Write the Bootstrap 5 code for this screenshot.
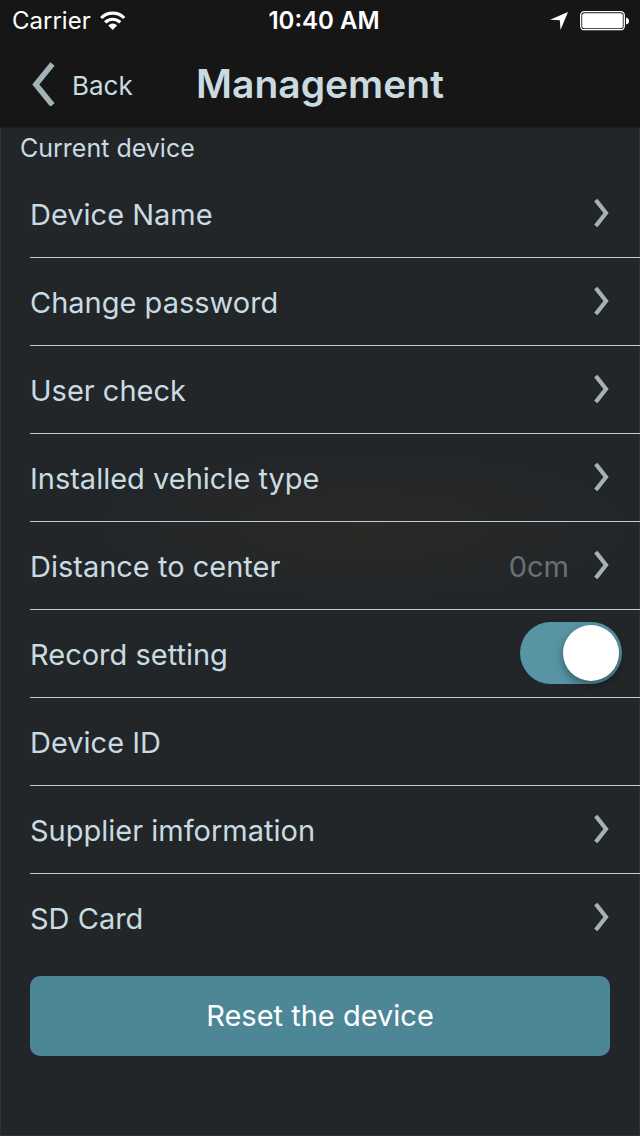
<!DOCTYPE html>
<html lang="en">
<head>
<meta charset="utf-8">
<meta name="viewport" content="width=device-width, initial-scale=1">
<title>Management</title>
<link href="https://cdn.jsdelivr.net/npm/bootstrap@5.3.0/dist/css/bootstrap.min.css" rel="stylesheet">
<style>
  :root { --ink: #c9dbe1; }
  body { background: #232629; color: var(--ink); font-family: Inter, "Liberation Sans", sans-serif; }
  .screen { background: radial-gradient(ellipse 260px 70px at 57% 525px, #292926, #23262900) #232629; box-shadow: inset 1px 0 #2e3236, inset -1px -1px #2e3236; }
  .top-area { background: #161616; box-shadow: inset 0 -1px #1c1e20; }
  .three-cols { display: grid; grid-template-columns: 1fr auto 1fr; align-items: center; }
  .status-bar { height: 40px; padding: 1px 4px 0 12px; font-size: 24px; line-height: 40px; color: #fff; }
  .battery { margin: 0 6px 0 12px; }
  .title-bar { height: 88px; padding: 0 32px; }
  .title-bar h1 { font-size: 39px; line-height: 48px; font-weight: 600; }
  .back-link { color: var(--ink); font-size: 26px; line-height: 40px; gap: 16px; }
  .back-link span { padding-top: 4px; }
  .section-label { font-size: 25px; line-height: 40px; padding: 0 0 2px 20px; font-weight: 400; }
  .settings { padding-left: 30px; }
  .setting { height: 88px; padding: 0 31px 2px 0; font-size: 29px; line-height: 40px; color: var(--ink); }
  .setting > span, .setting > label { padding-top: 4px; }
  .settings li:not(:last-child) .setting { border-bottom: 1px solid #c5cfd2; }
  .setting-value { color: #687074; margin-right: 24px; }
  .setting.has-switch { padding-right: 18px; }
  .form-switch .form-check-input.toggle {
    width: 102px; height: 62px; margin: 0; border: 0; border-radius: 31px; display: grid; align-items: center; justify-items: start;
    background: #3a4044; box-shadow: none;
  }
  .form-switch .toggle::before { content: ""; width: 56px; height: 56px; margin: 0 3px; border-radius: 50%; background: #fff; box-shadow: 0 4px 10px #0006; }
  .form-switch .form-check-input.toggle:checked { background: #5795a5; justify-items: end; }
  .reset-area { padding: 14px 30px; }
  .btn-reset { height: 80px; border-radius: 10px; font-size: 29px; line-height: 40px; --bs-btn-padding-y: 2px; --bs-btn-bg: #4d8797; --bs-btn-color: #fff; --bs-btn-hover-bg: #437685; --bs-btn-hover-color: #fff; --bs-btn-border-width: 0; }
</style>
</head>
<body>
<svg class="d-none" aria-hidden="true">
  <symbol id="chevron" viewBox="0 0 16 30"><path d="M2.800 2 13 15 2.800 28" fill="none" stroke="#a3b2b7" stroke-width="4.200"/></symbol>
</svg>
<div class="screen min-vh-100">
  <header class="top-area">
    <div class="status-bar three-cols">
      <div class="d-flex align-items-center">
        <span>Carrier</span>
        <svg class="ms-2" width="28" height="20" viewBox="0 0 28 20" role="img" aria-label="Wi-Fi"><g fill="none" stroke="#fff" stroke-width="3.200"><path d="M2.200 7a16 16 0 0 1 23 0"/><path d="M6.200 11.400a10.500 10.500 0 0 1 15 0"/></g><path d="M13.700 19l-4.400-4.600a6.200 6.200 0 0 1 8.800 0z" fill="#fff"/></svg>
      </div>
      <span class="fw-semibold">10:40 AM</span>
      <div class="d-flex align-items-center justify-content-end">
        <svg width="18" height="18" viewBox="0 0 18 18" role="img" aria-label="Location"><path d="M18 0 10.500 18 9.800 8.200 0 7.800z" fill="#fff"/></svg>
        <svg class="battery" width="50" height="20" viewBox="0 0 50 20" role="img" aria-label="Battery full"><rect x=".7" y=".7" width="43.600" height="18" rx="3.500" fill="none" stroke="#fff" stroke-width="1.300"/><rect x="2.200" y="2.200" width="40.600" height="15" rx="2" fill="#fff"/><path d="M46 6.500q3 .5 3 3.500t-3 3.500z" fill="#fff"/></svg>
      </div>
    </div>
    <nav class="title-bar three-cols">
      <a href="#" class="back-link d-inline-flex align-items-center text-decoration-none">
        <svg width="24" height="44" viewBox="0 0 24 44" aria-hidden="true"><path d="M20.500 2 3.800 22.500 20.500 43" fill="none" stroke="#a3b2b7" stroke-width="5.500"/></svg><span>Back</span></a>
      <h1 class="m-0">Management</h1>
    </nav>
  </header>
  <main>
    <h2 class="section-label m-0">Current device</h2>
    <ul class="settings list-unstyled m-0">
      <li><a href="#" class="setting d-flex align-items-center text-decoration-none"><span class="me-auto">Device Name</span><svg width="16" height="30"><use href="#chevron"/></svg></a></li>
      <li><a href="#" class="setting d-flex align-items-center text-decoration-none"><span class="me-auto">Change password</span><svg width="16" height="30"><use href="#chevron"/></svg></a></li>
      <li><a href="#" class="setting d-flex align-items-center text-decoration-none"><span class="me-auto">User check</span><svg width="16" height="30"><use href="#chevron"/></svg></a></li>
      <li><a href="#" class="setting d-flex align-items-center text-decoration-none"><span class="me-auto">Installed vehicle type</span><svg width="16" height="30"><use href="#chevron"/></svg></a></li>
      <li><a href="#" class="setting d-flex align-items-center text-decoration-none"><span class="me-auto">Distance to center</span><span class="setting-value">0cm</span><svg width="16" height="30"><use href="#chevron"/></svg></a></li>
      <li><div class="setting has-switch form-switch d-flex align-items-center"><label class="me-auto" for="record">Record setting</label><input class="form-check-input toggle" type="checkbox" role="switch" id="record" checked></div></li>
      <li><div class="setting d-flex align-items-center"><span>Device ID</span></div></li>
      <li><a href="#" class="setting d-flex align-items-center text-decoration-none"><span class="me-auto">Supplier imformation</span><svg width="16" height="30"><use href="#chevron"/></svg></a></li>
      <li><a href="#" class="setting d-flex align-items-center text-decoration-none"><span class="me-auto">SD Card</span><svg width="16" height="30"><use href="#chevron"/></svg></a></li>
    </ul>
    <div class="reset-area"><button type="button" class="btn btn-reset w-100">Reset the device</button></div>
  </main>
</div>
<script src="https://cdn.jsdelivr.net/npm/bootstrap@5.3.0/dist/js/bootstrap.bundle.min.js"></script>
</body>
</html>
